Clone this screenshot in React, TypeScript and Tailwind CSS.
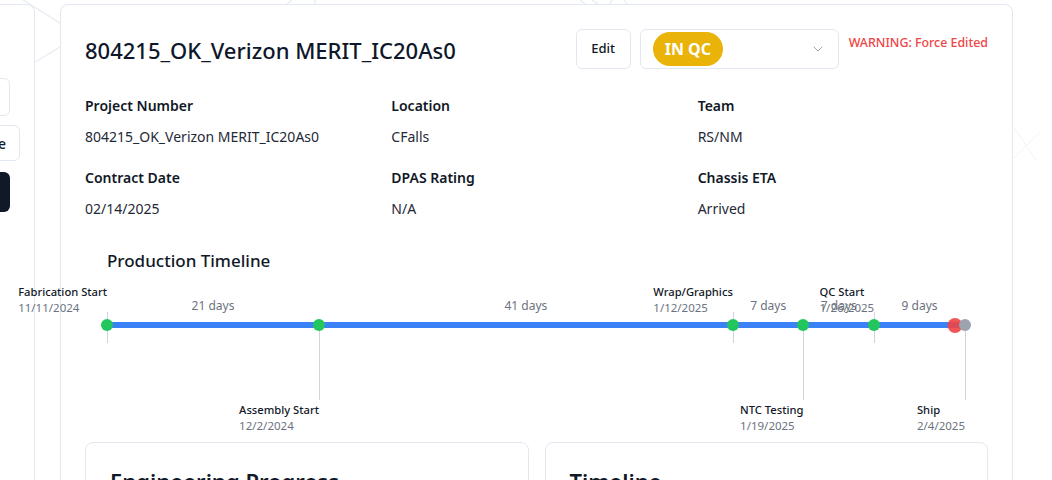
import { ChevronDown } from "lucide-react";

const milestones = [
    { name: "Fabrication Start", date: "11/11/2024", day: 0, side: "top", done: true },
    { name: "Assembly Start", date: "12/2/2024", day: 21, side: "bottom", done: true },
    { name: "Wrap/Graphics", date: "1/12/2025", day: 62, side: "top", done: true },
    { name: "NTC Testing", date: "1/19/2025", day: 69, side: "bottom", done: true },
    { name: "QC Start", date: "1/26/2025", day: 76, side: "top", done: true },
    { name: "Ship", date: "2/4/2025", day: 85, side: "bottom", done: false },
];
const totalDays = 85;
const today = 84;

const pct = (d: number) => (d / totalDays) * 100 + "%";

const Info = ({ label, value }: { label: string; value: string }) => (
    <div className="flex flex-col">
        <p className="text-[14px] leading-5 font-semibold text-[#111827]">{label}</p>
        <p className="mt-[9px] text-[14px] leading-6 text-[#1f2937]">{value}</p>
    </div>
);

const Timeline = () => (
    <div className="relative h-[150px] w-full">
        <div className="absolute left-0 right-0 top-[38px] h-[6px] bg-[#3b82f6]" />
        {milestones.slice(1).map((m, i) => {
            const prev = milestones[i];
            return (
                <span
                    key={"gap" + i}
                    className="absolute top-[14px] -translate-x-1/2 whitespace-nowrap text-[12px] leading-4 text-[#6b7280]"
                    style={{ left: pct((prev.day + m.day) / 2) }}
                >
                    {m.day - prev.day} days
                </span>
            );
        })}
        {milestones.map((m) => (
            <div key={m.name} className="absolute top-0 h-full" style={{ left: pct(m.day) }}>
                {m.side === "top" ? (
                    <div className="absolute left-0 top-[28px] h-[31px] w-px bg-[#d1d5db]" />
                ) : (
                    <div className="absolute left-0 top-[41px] h-[75px] w-px bg-[#d1d5db]" />
                )}
                <div
                    className={
                        m.side === "top"
                            ? "absolute right-0 top-0 whitespace-nowrap leading-4"
                            : "absolute right-0 top-[118px] whitespace-nowrap leading-4"
                    }
                >
                    <p className="text-[11.2px] font-medium text-[#111827]">{m.name}</p>
                    <p className="text-[11.5px] text-[#6b7280]">{m.date}</p>
                </div>
            </div>
        ))}
        <div
            className="absolute top-[34px] h-[15px] w-[15px] -translate-x-1/2 rounded-full bg-[#ef4444] opacity-90"
            style={{ left: pct(today) }}
        />
        {milestones.map((m) => (
            <div
                key={m.name + "dot"}
                className={
                    m.done
                        ? "absolute top-[35px] h-[12px] w-[12px] -translate-x-1/2 rounded-full bg-[#22c55e]"
                        : "absolute top-[35px] h-[12px] w-[12px] -translate-x-1/2 rounded-full bg-[#9ca3af]"
                }
                style={{ left: pct(m.day) }}
            />
        ))}
    </div>
);

const App = () => {
    return (
        <div className="relative h-[480px] w-full overflow-hidden bg-white font-['Noto_Sans',sans-serif]">
            <svg className="absolute inset-0 h-full w-full" viewBox="0 0 1052 480" fill="none">
                <g stroke="#e8eaee" strokeWidth="1.2">
                    <path d="M23 0 L60 23" />
                    <path d="M35 62 L60 47" />
                    <path d="M287 4 L292 0" />
                    <path d="M315 0 L315 4" />
                    <path d="M580 0 L585 4" />
                    <path d="M592 0 L598 4" />
                    <path d="M612 0 L610 4" />
                    <path d="M624 0 L627 4" />
                </g>
                <g stroke="#f1f2f4" strokeWidth="1">
                    <path d="M1014 128 L1036 160" />
                    <path d="M1014 158 L1040 132" />
                </g>
            </svg>
            <div className="relative flex gap-[25px] pt-1">
                {/* side panel */}
                <div className="ml-[-265px] h-[600px] w-[300px] shrink-0 rounded-lg border border-[#e2e8f0] bg-white">
                    <div className="flex flex-col pr-6 pt-[73px]">
                        <div className="h-[38px] w-full rounded-md border border-[#e2e8f0] bg-white" />
                        <div className="mt-[9px] flex justify-end">
                            <button className="mr-[-10px] flex h-[36px] w-[120px] items-center justify-end rounded-md border border-[#e2e8f0] bg-white pr-[13px] text-[14px] font-medium text-[#111827]">
                                Update
                            </button>
                        </div>
                        <div className="mt-[11px] h-[40px] w-full rounded-md bg-[#111827]" />
                    </div>
                </div>

                {/* main card */}
                <div className="w-[953px] shrink-0 rounded-lg border border-[#e2e8f0] bg-white p-6">
                    <div className="flex items-start justify-between">
                        <h1 className="mt-[5px] text-[22px] leading-8 font-medium text-[#0f172a]">
                            804215_OK_Verizon MERIT_IC20As0
                        </h1>
                        <div className="flex items-start">
                            <button className="h-[40px] w-[55px] rounded-md border border-[#e2e8f0] bg-white text-[13px] font-medium text-[#111827]">
                                Edit
                            </button>
                            <div className="ml-[9px] flex h-[40px] w-[199px] items-center justify-between rounded-md border border-[#e2e8f0] bg-white pl-3 pr-3">
                                <span className="flex h-[34px] items-center rounded-full bg-[#eab308] px-3 text-[16px] font-bold text-white">
                                    IN QC
                                </span>
                                <ChevronDown className="h-4 w-4 text-[#9ca3af]" strokeWidth={1.5} />
                            </div>
                            <p className="ml-[10px] mt-[6px] text-[12.4px] leading-4 font-medium text-[#ef4444]">
                                WARNING: Force Edited
                            </p>
                        </div>
                    </div>

                    <div className="mt-[27px] grid grid-cols-3 gap-x-4 gap-y-[19px]">
                        <Info label="Project Number" value="804215_OK_Verizon MERIT_IC20As0" />
                        <Info label="Location" value="CFalls" />
                        <Info label="Team" value="RS/NM" />
                        <Info label="Contract Date" value="02/14/2025" />
                        <Info label="DPAS Rating" value="N/A" />
                        <Info label="Chassis ETA" value="Arrived" />
                    </div>

                    <div className="pl-[22px] pr-[23px]">
                        <h2 className="mt-[26px] text-[17px] leading-7 font-medium text-[#111827]">Production Timeline</h2>
                        <div className="mt-[9px]">
                            <Timeline />
                        </div>
                    </div>

                    <div className="mt-2 grid grid-cols-2 gap-4">
                        <div className="h-[300px] rounded-lg border border-[#e2e8f0] bg-white px-6 pt-[22px]">
                            <h3 className="text-[22px] leading-8 font-semibold text-[#111827]">Engineering Progress</h3>
                        </div>
                        <div className="h-[300px] rounded-lg border border-[#e2e8f0] bg-white px-6 pt-[22px]">
                            <h3 className="text-[22px] leading-8 font-semibold text-[#111827]">Timeline</h3>
                        </div>
                    </div>
                </div>
            </div>
        </div>
    );
};

export default App;
